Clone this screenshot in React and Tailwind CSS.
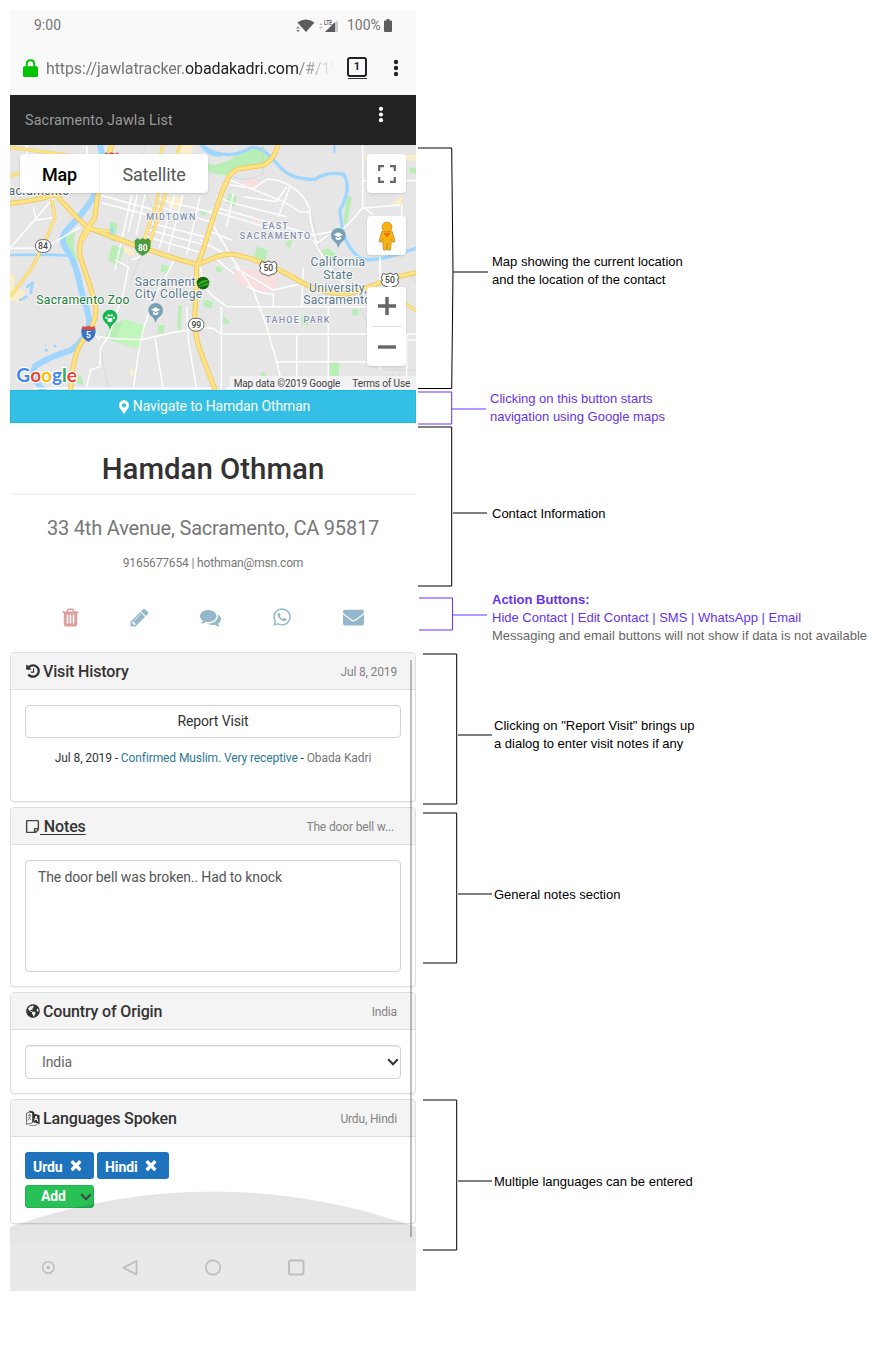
import React from "react";
import { FaWhatsapp, FaEnvelope, FaRegStickyNote, FaGlobeAmericas, FaMapMarkerAlt } from "react-icons/fa";

const GLYPHS = {
  trash:
    "M704 1376v-704q0-14-9-23t-23-9h-64q-14 0-23 9t-9 23v704q0 14 9 23t23 9h64q14 0 23-9t9-23zm256 0v-704q0-14-9-23t-23-9h-64q-14 0-23 9t-9 23v704q0 14 9 23t23 9h64q14 0 23-9t9-23zm256 0v-704q0-14-9-23t-23-9h-64q-14 0-23 9t-9 23v704q0 14 9 23t23 9h64q14 0 23-9t9-23zm-544-992h448l-48-117q-7-9-17-11h-317q-10 2-17 11zm928 32v64q0 14-9 23t-23 9h-96v948q0 83-47 143.500t-113 60.500h-832q-66 0-113-58.500t-47-141.500v-952h-96q-14 0-23-9t-9-23v-64q0-14 9-23t23-9h309l70-167q15-37 54-63t79-26h320q40 0 79 26t54 63l70 167h309q14 0 23 9t9 23z",
  pencil:
    "M491 1536l91-91-235-235-91 91v107h128v128h107zm523-928q0-22-22-22-10 0-17 7l-542 542q-7 7-7 17 0 22 22 22 10 0 17-7l542-542q7-7 7-17zm-54-192l416 416-832 832h-416v-416zm683 96q0 53-37 90l-166 166-416-416 166-165q36-38 90-38 53 0 91 38l235 234q37 39 37 91z",
  comments:
    "M1408 768q0 139-94 257t-256.500 186.500-353.500 68.500q-86 0-176-16-124 88-278 128-36 9-86 16h-3q-11 0-20.500-8t-11.500-21q-1-3-1-6.500t.5-6.500 2-6l2.500-5 3.500-5.500 4-5 4.500-5 4-4.500q5-6 23-25t26-29.500 22.500-29 25-38.500 20.500-44q-124-72-195-177t-71-224q0-139 94-257t256.500-186.500 353.500-68.500 353.500 68.500 256.500 186.500 94 257zm384 256q0 120-71 224.500t-195 176.500q10 24 20.500 44t25 38.500 22.500 29 26 29.500 23 25q1 1 4 4.500t4.500 5 4 5 3.500 5.500l2.500 5 2 6 .5 6.500-1 6.500q-3 14-13 22t-22 7q-50-7-86-16-154-40-278-128-90 16-176 16-271 0-472-132 58 4 88 4 161 0 309-45t264-129q125-92 192-212t67-254q0-77-23-152 129 71 204 178t75 230z",
  history:
    "M1664 896q0 156-61 298t-164 245-245 164-298 61q-172 0-327-72.500t-264-204.500q-7-10-6.500-22.500t8.500-20.500l137-138q10-9 25-9 16 2 23 12 73 95 179 147t225 52q104 0 198.500-40.500t163.500-109.500 109.500-163.500 40.500-198.500-40.500-198.500-109.500-163.500-163.500-109.500-198.500-40.500q-98 0-188 35.500t-160 101.500l137 138q31 30 14 69-17 40-59 40h-448q-26 0-45-19t-19-45v-448q0-42 40-59 39-17 69 14l130 129q107-101 244.500-156.500t284.500-55.500q156 0 298 61t245 164 164 245 61 298zm-640-288v448q0 14-9 23t-23 9h-320q-14 0-23-9t-9-23v-64q0-14 9-23t23-9h224v-352q0-14 9-23t23-9h64q14 0 23 9t9 23z",
  times:
    "M1490 1322q0 40-28 68l-136 136q-28 28-68 28t-68-28l-294-294-294 294q-28 28-68 28t-68-28l-136-136q-28-28-28-68t28-68l294-294-294-294q-28-28-28-68t28-68l136-136q28-28 68-28t68 28l294 294 294-294q28-28 68-28t68 28l136 136q28 28 28 68t-28 68l-294 294 294 294q28 28 28 68z",
};

function Glyph({ name, className }) {
  return (
    <svg viewBox="0 0 1792 1792" fill="currentColor" className={className}>
      <path d={GLYPHS[name]} />
    </svg>
  );
}

function LanguageIcon({ className }) {
  return (
    <svg viewBox="0 0 14 16" className={className}>
      <path d="M0.5 3.2 6.5 1.5V12.800L0.500 14.400Z" fill="#f4f4f4" stroke="#333" strokeWidth=".7" />
      <path d="M1.800 5.600 5 4.900M3.300 4.200V5.500M4.700 5.300Q4 8.500 1.600 10.500M2.200 7.200Q3.800 8.200 4.900 10" fill="none" stroke="#555" strokeWidth=".7" />
      <path d="M3.500 0.500 8.200 2 8.200 5 6.500 3.500 3 1.700Z" fill="#333" />
      <path d="M6.700 3.200 13.600 5.200V14L6.700 12Z" fill="#333" />
      <path d="M8.600 10.600 10.100 6 11.800 11.500M9.100 9.200 11.200 9.700" fill="none" stroke="#fff" strokeWidth="1" />
      <path d="M3.500 15.400Q8 16.400 11.500 14.600" fill="none" stroke="#555" strokeWidth=".7" />
    </svg>
  );
}

const YELLOW_ROADS = [
  "M30 190Q100 184 168 163Q210 215 262 262C340 292 460 340 592 374C625 362 660 340 695 343C760 352 830 385 880 412C930 445 985 462 1040 462C1100 450 1150 415 1248 398",
  "M335 15 318 80 292 170 284 235 262 265Q234 300 240 345C250 390 280 450 288 510Q285 560 250 600 218 640 212 750",
  "M590 374 588 450 584 540C584 610 610 650 645 750",
  "M592 374C615 330 650 180 680 125Q692 92 720 86L790 76Q822 62 834 15",
];
const THIN_YELLOW = [
  "M155 180 165 232 135 305 95 385 30 470",
  "M30 22 150 38 220 48",
  "M425 318 470 190 482 100Q478 40 490 15",
  "M445 322 488 190 510 100Q525 60 540 15",
  "M30 110 70 92 100 60",
  "M250 300 270 265 330 275",
  "M1212 488 1248 512",
];
const WHITE_ROADS = [
  "M30 325 130 325 240 262 M30 325 160 175 M100 200 108 240 168 232 M80 15 82 50 M260 15 262 60",
  "M395 165 365 300 345 390 M412 165 385 275 M435 165 408 285",
  "M300 165 470 212 M305 188 455 228 M470 175 650 222 M460 195 645 250 M455 250 635 296 M450 270 625 318 M440 290 610 340",
  "M524 165 478 325 M548 165 505 335 M600 170 560 345",
  "M300 590Q360 600 430 598L530 575 600 565 640 565 664 582H1248",
  "M260 740 272 690 300 680 302 622 325 590 370 460 385 380 345 360 M400 745 415 640 432 560 460 480 520 365",
  "M465 595 490 750 M395 360 420 350 M265 560 300 600",
  "M560 500 565 600 590 750 M600 380 612 440 640 470 680 500H1100 M664 500V750",
  "M630 240 700 360 760 450 800 560 830 665 850 750 M600 300 680 345 M620 270 695 300 M630 210 860 280 930 300",
  "M640 200 940 285 1025 270Q1060 240 1085 205L1200 195 M650 170 700 190 860 230 M690 120 850 185 900 215H930",
  "M690 135 760 145 800 118 830 120Q910 145 930 210 930 260 952 310",
  "M730 170 830 185 860 140 M870 140 835 230 M700 160 680 260",
  "M1088 15V200L1120 225 M1088 122H1248 M1205 195V250 M1140 350V425 M950 310 985 285 M940 300 960 335 1000 400 1035 430",
  "M700 380 820 450 910 430 M910 385 905 500 M740 440 790 460 820 462V500 M700 400 640 350",
  "M890 582V750 M985 500V750 M830 665H1100 M1220 600H1248 M1220 582V750 M680 745H1100 M1140 600V690 M100 745H640",
];
const GREENS = [
  "M628 80 690 60 715 35 790 20 818 55 790 75 715 85 690 108 630 98Z",
  "M335 315 372 325 355 380 325 360Z",
  "M315 590 330 560 372 538 430 556 418 628 345 605Z",
  "M330 245 352 250 345 305 322 298Z",
  "M195 290 225 275 220 320 235 365 200 340Z",
  "M485 372 508 380 500 402 482 392Z",
  "M535 495 545 495 542 570 532 570Z",
  "M475 555 495 555 490 582 472 580Z",
  "M640 75 620 70 625 95 660 100Z",
  "M600 208 622 215 618 228 598 220Z",
  "M685 160 710 170 705 200 678 188Z",
  "M770 320 803 330 795 365 762 352Z",
  "M1040 165 1056 170 1040 255 1030 250Z",
  "M860 305 878 298 870 325 855 318Z",
  "M965 330 985 325 1010 345 1000 360 975 350Z",
  "M612 478 640 485 635 505 610 500Z",
  "M645 378 670 385 660 400 650 395Z",
  "M670 530 690 545 680 555 668 545Z",
  "M905 525 930 530 922 558 905 550Z",
  "M988 665 1018 668 1016 710 988 706Z",
  "M1058 505 1075 510 1076 528 1055 525Z",
  "M1228 80 1248 85V102L1228 98Z",
  "M780 700 792 695 800 710 785 712Z",
  "M225 695 245 710 250 735 230 730Z",
];

function Shield50({ x, y }) {
  return (
    <g transform={`translate(${x} ${y})`}>
      <path d="M-20-20-10-16 0-21 10-16 20-20 26-8Q20 0 26 8 22 20 8 20L0 24-8 20Q-22 20-26 8-20 0-26-8Z" fill="#fff" stroke="#555" strokeWidth="3" />
      <text textAnchor="middle" y="9" fontSize="26" fontWeight="500" fill="#444">50</text>
    </g>
  );
}

function CollegePin({ x, y }) {
  return (
    <g transform={`translate(${x} ${y})`}>
      <path d="M0 32Q-4 16-14 10A22 22 0 1 1 14 10Q4 16 0 32Z" fill="#78a0b4" />
      <path d="M-14-9 0-16 14-9 0-2ZM-8-3V4Q0 10 8 4V-3L0 2Z" fill="#fff" />
    </g>
  );
}

function MapDrawing() {
  return (
    <svg viewBox="30 15 1218 735" preserveAspectRatio="none" className="block h-[245px] w-full font-[Roboto,sans-serif]">
      <rect x="30" y="15" width="1218" height="735" fill="#e6e6e6" />
      <g fill="#fbeecb">
        <path d="M30 395 45 410 40 440 75 455 65 490 30 480Z" />
        <path d="M370 320 405 330 400 350 375 340ZM500 170 550 175 540 210 505 200ZM1172 195 1206 168V198ZM1095 45H1248V62H1095ZM100 80 135 100 125 130 80 120Z" />
        <path d="M540 15H580L570 50 540 55ZM1170 590 1190 600 1185 615ZM390 685 402 690 400 710 388 705Z" />
      </g>
      <g fill="#f8dfe0">
        <path d="M725 130 750 112 775 125 770 145 740 148Z" />
        <path d="M705 380 830 400 835 450 790 460 740 445 705 420ZM755 235 780 240 775 250 755 248Z" />
      </g>
      <g fill="#b9efb6">
        {GREENS.map((d) => <path key={d} d={d} />)}
      </g>
      <path d="M372 538 430 556 418 628 345 605Z" fill="#c0f5bb" />
      <g fill="none" stroke="#9fd6ff" strokeLinecap="round" strokeLinejoin="round">
        <path d="M300 15Q318 80 278 175 250 220 205 265 178 290 194 320 225 360 238 425C244 470 268 510 268 550Q258 600 210 632 150 650 106 678 85 705 130 750" strokeWidth="18" />
        <path d="M30 345 150 344 215 348" strokeWidth="8" />
        <path d="M605 15Q625 45 660 44" strokeWidth="12" />
        <path d="M82 440 98 428 92 460M60 480 80 470M138 630 140 632M165 618 166 619M337 265 334 290" strokeWidth="8" />
        <path d="M605 15Q640 45 690 44 725 40 755 22C790 20 810 50 830 70 860 110 900 118 945 118 970 100 1000 98 1030 102 1050 130 1045 165 1020 210 1025 280 1038 320 1080 355 1120 368 1170 350 1248 325" strokeWidth="10" />
        <path d="M1003 18V35" strokeWidth="7" />
      </g>
      <g fill="none" stroke="#cfd1d3" strokeWidth="2">
        <path d="M438 15 410 100M440 165 470 230 390 430 M700 110Q740 130 790 100V15 M930 200 960 330 1060 460 1120 590 M1150 690H1248M1160 700V740M1180 700V740M1200 700V740M1150 715H1240 M300 620 325 750M1230 400 1248 430" />
      </g>
      <g fill="none" stroke="#fff" strokeWidth="4.500" strokeLinejoin="round">
        {WHITE_ROADS.map((d) => <path key={d} d={d} />)}
      </g>
      <g fill="none" strokeLinejoin="round">
        {THIN_YELLOW.map((d) => <path key={d} d={d} stroke="#f3cd68" strokeWidth="10" />)}
        {YELLOW_ROADS.map((d) => <path key={d} d={d} stroke="#edc75c" strokeWidth="15" />)}
        {THIN_YELLOW.map((d) => <path key={d} d={d} stroke="#ffe68a" strokeWidth="6" />)}
        {YELLOW_ROADS.map((d) => <path key={d} d={d} stroke="#ffe284" strokeWidth="10" />)}
      </g>

      <g stroke="#fff" strokeWidth="5" paintOrder="stroke" strokeOpacity=".75" fontSize="27" fill="#8390b2" fontWeight="500" letterSpacing="3.600" textAnchor="middle">
        <text x="514" y="239">MIDTOWN</text>
        <text x="827" y="268">EAST</text>
        <text x="827" y="296">SACRAMENTO</text>
        <text x="894" y="550">TAHOE PARK</text>
      </g>
      <g stroke="#fff" strokeWidth="6" paintOrder="stroke" strokeOpacity=".8" fontSize="36.500" fill="#5b7a8c" textAnchor="middle" letterSpacing=".9">
        <text x="404" y="437" textAnchor="start">Sacrament</text>
        <text x="506" y="475">City College</text>
        <text x="1014" y="378">California</text>
        <text x="1014" y="416">State</text>
        <text x="1014" y="455">University,</text>
        <text x="1012" y="493">Sacramento</text>
        <text x="249" y="493" fill="#1b7f3a">Sacramento Zoo</text>
        <text x="117" y="164" fill="#566">acramento</text>
      </g>

      <g fill="#fff" stroke="#666" strokeWidth="3">
        <rect x="106" y="299" width="47" height="38" rx="19" />
        <rect x="565" y="535" width="47" height="38" rx="19" />
      </g>
      <g fontSize="26" fontWeight="500" fill="#444" textAnchor="middle">
        <text x="129" y="327">84</text>
        <text x="589" y="563">99</text>
      </g>
      <Shield50 x={805} y={384} />
      <Shield50 x={1170} y={420} />
      <path d="M404 300H452L451 325Q446 340 428 347 409 340 405 325Z" fill="#4b9c3c" />
      <path d="M407 300 412 294 420 299 428 294 436 299 444 294 450 300V309H406Z" fill="#4b9c3c" />
      <text x="428" y="333" textAnchor="middle" fontSize="25" fontWeight="700" fill="#fff">80</text>
      <path d="M245 565H286Q292 592 265 606 238 592 245 565Z" fill="#3a73c8" />
      <path d="M247 558 256 561 265 557 274 561 284 558 285 569H246Z" fill="#d94b3d" />
      <text x="265" y="594" textAnchor="middle" fontSize="25" fontWeight="700" fill="#fff">5</text>
      <path d="M315 37 325 41 335 37 345 41 355 37 356 48H314Z" fill="#d94b3d" />

      <CollegePin x={467} y={518} />
      <CollegePin x={1015} y={293} />
      <path d="M330 570Q326 554 316 548A22 22 0 1 1 344 548Q334 554 330 570Z" fill="#12b64b" />
      <g fill="#fff">
        <ellipse cx="330" cy="540" rx="8" ry="6.500" />
        <circle cx="319" cy="533" r="3.500" />
        <circle cx="326" cy="526" r="3.500" />
        <circle cx="335" cy="526" r="3.500" />
        <circle cx="342" cy="533" r="3.500" />
      </g>
      <circle cx="609" cy="429" r="19" fill="#17670d" />
      <path d="M592 434Q605 416 625 421L627 434 598 441Z" fill="#2fae22" />
      <path d="M594 438 626 425" stroke="#0d4a08" strokeWidth="3" />

      <g fontSize="57" fontWeight="700" stroke="#fff" strokeWidth="7" paintOrder="stroke" strokeLinejoin="round" fontFamily="Lato, sans-serif">
        <text x="49" y="727" textLength="182" lengthAdjust="spacingAndGlyphs">
          <tspan fill="#4285f4">G</tspan><tspan fill="#ea4335">o</tspan><tspan fill="#fbbc05">o</tspan><tspan fill="#4285f4">g</tspan><tspan fill="#34a853">l</tspan><tspan fill="#ea4335">e</tspan>
        </text>
      </g>
      <rect x="688" y="708" width="560" height="42" fill="#f5f5f5" fillOpacity=".75" />
      <g fontSize="30" fill="#444">
        <text x="701" y="742" textLength="320">Map data ©2019 Google</text>
        <text x="1057" y="742" textLength="174">Terms of Use</text>
      </g>
    </svg>
  );
}

function Kebab({ className }) {
  return (
    <svg viewBox="0 0 6 18" className={className} fill="currentColor">
      <circle cx="3" cy="3" r="2.200" />
      <circle cx="3" cy="9" r="2.200" />
      <circle cx="3" cy="15" r="2.200" />
    </svg>
  );
}

function StatusBar() {
  return (
    <div className="flex h-[31px] items-center pl-6 pr-6 text-[14px] text-[#757575]">
      <span className="flex-1">9:00</span>
      <svg viewBox="0 0 44 14" className="mr-[7px] h-3.5 w-[44px]">
        <path d="M1.500 3.500Q9.500-2.500 18.500 3.500L10 13Z" fill="#5c5c5c" />
        <path d="M0 9.500 2 7.500 4 9.500ZM0 11 2 13 4 11Z" fill="#777" />
        <path d="M23 6 24.800 4 26.500 6ZM23 8 24.800 10 26.500 8Z" fill="#bbb" />
        <path d="M42 1V13H39V4Z" fill="#ccc" />
        <path d="M29 13 39 3V13Z" fill="#5c5c5c" />
        <text x="28" y="5.500" fontSize="6.500" fontWeight="700" fill="#666" textLength="8" lengthAdjust="spacingAndGlyphs">LTE</text>
      </svg>
      <span className="w-[35px]">100%</span>
      <svg viewBox="0 0 8 13" className="ml-[2px] h-[13px] w-2">
        <path d="M2.500 0h3v1.500H7q1 0 1 1V12q0 1-1 1H1q-1 0-1-1V2.500q0-1 1-1h1.500Z" fill="#5c5c5c" />
      </svg>
    </div>
  );
}

function AddressBar() {
  return (
    <div className="flex h-[54px] items-center pl-[13px] pr-[16px]">
      <svg viewBox="0 0 15 18" className="h-[18px] w-[15px]">
        <path d="M3.700 8V5Q3.700 1.200 7.500 1.200T11.300 5V8" fill="none" stroke="#00c400" strokeWidth="2" />
        <rect y="7.200" width="15" height="10.800" rx="1.500" fill="#00c400" />
      </svg>
      <div className="ml-2 w-[292px] whitespace-nowrap pt-px text-[16px] tracking-[-0.12px] text-[#777] [mask-image:linear-gradient(to_right,#000_86%,transparent_99%)]">
        https://jawlatracker.<span className="text-[#222]">obadakadri.com</span>/#/1V
      </div>
      <div className="ml-[9px] mr-auto flex flex-col items-center gap-px">
        <span className="flex h-5 w-5 items-center justify-center rounded-[3px] border-2 border-[#222] text-[11px] font-bold text-[#222]">1</span>
        <span className="h-px w-[19px] bg-[#333]" />
      </div>
      <Kebab className="h-[18px] w-2 text-[#222]" />
    </div>
  );
}

function MapControls() {
  return (
    <>
      <div className="absolute left-[10px] top-[9px] flex h-[39px] rounded-sm bg-white pt-0.5 text-[18px] tracking-[-0.15px] shadow">
        <span className="flex w-[80px] items-center justify-center border-r border-[#eee] font-medium text-black">Map</span>
        <span className="flex w-[108px] items-center justify-center text-[#565656]">Satellite</span>
      </div>
      <div className="absolute left-[357px] top-[9px] flex h-[39px] w-[39px] items-center justify-center rounded-sm bg-white shadow">
        <svg viewBox="0 0 18 18" className="h-[18px] w-[18px]" fill="none" stroke="#666" strokeWidth="2.200">
          <path d="M1.200 6V1.200H6M12 1.200h4.800V6M16.800 12v4.800H12M6 16.800H1.200V12" />
        </svg>
      </div>
      <div className="absolute left-[357px] top-[71px] flex h-[39px] w-[39px] items-center justify-center rounded-sm bg-white shadow">
        <svg viewBox="0 0 18 30" className="h-[30px] w-[18px]">
          <path d="M4 10Q9 12 14 10L17 20 15 21.500 13.500 18 12.500 29H9.700L9 22 8.300 29H5.500L4.500 18 3 21.500 1 20Z" fill="#fbb40e" stroke="#b98a2a" strokeWidth=".8" />
          <path d="M5 11.500Q9 13 13 11.500L9 16.500Z" fill="#e8710a" />
          <circle cx="9" cy="6" r="4.900" fill="#fbb40e" stroke="#b98a2a" strokeWidth=".8" />
        </svg>
      </div>
      <div className="absolute left-[357px] top-[142px] flex h-[79px] w-[39px] flex-col items-center rounded-sm bg-white shadow">
        <svg viewBox="0 0 18 18" className="mt-[10px] h-[18px] w-[18px]" stroke="#666" strokeWidth="3.400">
          <path d="M0 9H18M9 0V18" />
        </svg>
        <span className="mt-[11px] h-px w-[30px] bg-[#e2e2e2]" />
        <svg viewBox="0 0 18 18" className="mt-[11px] h-[18px] w-[18px]" stroke="#666" strokeWidth="3.400">
          <path d="M0 9H18" />
        </svg>
      </div>
    </>
  );
}

function Card({ icon, title, aside, asideClass = "", className, children }) {
  return (
    <section className={`mb-[5px] flex flex-col rounded-[4px] border border-[#dedede] bg-white shadow-[0_1px_1px_rgba(0,0,0,.05)] ${className}`}>
      <header className="flex h-[37px] shrink-0 items-center rounded-t-[3px] border-b border-[#dedede] bg-[#f4f4f4] px-[14px] pr-[18px] text-[#333]">
        {icon}
        <h2 className="flex-1 pt-0.5 text-[16px] font-medium leading-5 tracking-[-0.15px]">{title}</h2>
        <span className={`pt-px text-[12px] tracking-[-0.15px] text-[#828282] ${asideClass}`}>{aside}</span>
      </header>
      <div className="px-[14px] pt-[15px]">{children}</div>
    </section>
  );
}

function Chevron({ className }) {
  return (
    <svg viewBox="0 0 12 8" className={className} fill="none" stroke="currentColor" strokeWidth="2">
      <path d="M1.200 1.200 6 6.200 10.800 1.200" />
    </svg>
  );
}

function Tag({ children, className }) {
  return (
    <span className={`flex h-[27px] items-center rounded-[3px] bg-[#1f73bd] pl-2 pt-[3px] text-[14px] font-bold tracking-[-0.1px] text-white ${className}`}>
      {children}
      <Glyph name="times" className="ml-[5px] h-4 w-4 -translate-y-[2px]" />
    </span>
  );
}

function Phone() {
  return (
    <main className="relative mt-[10px] flex h-[1281px] w-[406px] flex-col bg-white font-[Roboto,sans-serif]">
      <div className="h-[85px] bg-[#f9f9f9]">
        <StatusBar />
        <AddressBar />
      </div>
      <nav className="flex h-[50px] items-center justify-between bg-[#222] pl-[15px] pr-[31px] text-[14.3px] tracking-[0.15px] text-[#999]">
        <span className="pt-0.5">Sacramento Jawla List</span>
        <Kebab className="mb-3 h-[17px] w-2 text-white" />
      </nav>
      <div className="relative h-[245px]">
        <MapDrawing />
        <MapControls />
      </div>
      <button className="flex h-[33px] items-center justify-center gap-1 border border-[#1cb9dd] bg-[#33c0e4] pl-[3px] text-[14px] tracking-[-0.13px] text-white">
        <FaMapMarkerAlt className="h-[14px] w-[10px]" />
        <span>Navigate to Hamdan Othman</span>
      </button>

      <h1 className="flex h-[72px] items-end justify-center border-b-2 border-[#f5f5f5] pb-1.5 text-[29.4px] font-medium leading-9 text-[#333]">Hamdan Othman</h1>
      <p className="mt-5 text-center text-[20px] leading-[26px] tracking-[-0.2px] text-[#777]">33 4th Avenue, Sacramento, CA 95817</p>
      <p className="mt-3.5 text-center text-[12px] leading-4 tracking-[-0.16px] text-[#777]">9165677654 | hothman@msn.com</p>
      <div className="mt-[36px] flex h-5 items-center text-[#93b8cb]">
        <Glyph name="trash" className="ml-[50px] h-[21px] w-[21px] text-[#dd9f9e]" />
        <Glyph name="pencil" className="ml-[48px] h-[21px] w-[21px]" />
        <Glyph name="comments" className="ml-[50px] h-[21px] w-[21px]" />
        <FaWhatsapp className="ml-[51px] h-5 w-5" />
        <FaEnvelope className="ml-[51px] h-[21px] w-[21px]" />
      </div>

      <div className="mt-[25px]">
        <Card className="h-[150px]" icon={<Glyph name="history" className="mr-0.5 h-4 w-4" />} title="Visit History" aside="Jul 8, 2019">
          <button className="h-[33px] w-full rounded-[4px] border border-[#d4d4d4] text-[14px] tracking-[-0.12px] text-[#333]">Report Visit</button>
          <p className="mt-3 text-center text-[12px] leading-4 tracking-[-0.1px] text-[#333]">
            Jul 8, 2019 - <span className="text-[#2d7797]">Confirmed Muslim. Very receptive</span> - <span className="text-[#777]">Obada Kadri</span>
          </p>
        </Card>
        <Card
          className="h-[180px]"
          icon={<FaRegStickyNote className="h-[15px] w-[15px] text-[#444]" />}
          title={<span className="whitespace-pre underline decoration-1 underline-offset-2"> Notes</span>}
          aside="The door bell w..."
          asideClass="mr-[3px]"
        >
          <div className="h-[112px] rounded-[4px] border border-[#d4d4d4] px-3 pt-1.5 text-[14px] leading-5 tracking-[-0.13px] text-[#555]">The door bell was broken.. Had to knock</div>
        </Card>
        <Card className="h-[102px]" icon={<FaGlobeAmericas className="ml-px mr-[3px] h-[14px] w-[14px]" />} title="Country of Origin" aside="India">
          <div className="flex h-[34px] items-center justify-between rounded-[4px] border border-[#d4d4d4] pl-4 pr-px text-[14px] tracking-[-0.1px] text-[#666] shadow-[inset_0_1px_1px_rgba(0,0,0,.08)]">
            India
            <Chevron className="h-2 w-3 text-[#333]" />
          </div>
        </Card>
        <Card className="h-[125px]" icon={<LanguageIcon className="ml-px mr-[3px] h-4 w-[14px]" />} title="Languages Spoken" aside="Urdu, Hindi">
          <div className="flex gap-[3px]">
            <Tag className="w-[69px]">Urdu</Tag>
            <Tag className="w-[72px]">Hindi</Tag>
          </div>
          <div className="mt-[6px] flex h-[23px] w-[69px] items-center justify-between rounded-[3px] border border-[#24b04d] bg-[#28c156] pl-[15px] pr-px text-[14px] font-bold tracking-[-0.1px] text-white">
            Add
            <Chevron className="h-2 w-3 text-[#444]" />
          </div>
        </Card>
      </div>

      <svg viewBox="0 0 406 100" className="pointer-events-none absolute bottom-0 left-0 h-[100px] w-full">
        <path d="M0 36Q100 0.500 203 0.500T406 36V52H0Z" fill="#000" fillOpacity=".1" />
        <rect y="52" width="406" height="48" fill="#e9e9e9" />
        <g fill="none" stroke="#bdbdbd" strokeWidth="1.500">
          <circle cx="38.300" cy="76.500" r="5.800" />
          <path d="M126.500 70V83.500L113.500 76.700Z" strokeWidth="1.800" strokeLinejoin="round" />
          <circle cx="203" cy="76.500" r="7.200" strokeWidth="1.700" />
          <rect x="279" y="69.500" width="14.500" height="14" rx="2" strokeWidth="1.900" />
        </g>
        <circle cx="38.300" cy="76.500" r="1.700" fill="#bbb" />
      </svg>
      <div className="absolute left-[400px] top-[650px] h-[577px] w-[2px] bg-black/25" />
    </main>
  );
}

function Note({ className, top, height, path, stroke = "#000", children }) {
  return (
    <div className={`flex ${className}`}>
      <svg viewBox={`416 ${top} 78 ${height}`} className="h-full w-[78px] shrink-0" fill="none" stroke={stroke}>
        <path d={path} />
      </svg>
      {children}
    </div>
  );
}

function Notes() {
  return (
    <aside className="w-[461px] whitespace-nowrap font-['Liberation_Sans',Arial,sans-serif] text-[13px] leading-[18px] text-black">
      <Note className="h-[389px]" top={0} height={389} path="M418 148H451.700L453 272 451.700 388.500H418M453 272H488">
        <p className="-ml-0.5 pt-[253px]">Map showing the current location<br />and the location of the contact</p>
      </Note>
      <Note className="h-[36px]" top={389} height={36} stroke="#6633ff" path="M418 392H451.700V424H418M451.700 409H486">
        <p className="-ml-1 pt-px text-[#6633ee]">Clicking on this button starts<br />navigation using Google maps</p>
      </Note>
      <Note className="h-[165px]" top={425} height={165} path="M418 427H451.700V586H418M453 513H487">
        <p className="-ml-0.5 pt-[80px]">Contact Information</p>
      </Note>
      <Note className="h-[60px]" top={590} height={60} stroke="#6633ff" path="M419 598H452.500V630H419M453 615H487">
        <p className="-ml-0.5 pt-px text-[#6633ee]">
          <b>Action Buttons:</b><br />Hide Contact | Edit Contact | SMS | WhatsApp | Email<br />
          <span className="text-[#666]">Messaging and email buttons will not show if data is not available</span>
        </p>
      </Note>
      <Note className="h-[158px]" top={650} height={158} path="M423 654H456.700V804H423M458 735H492">
        <p className="pt-[67px]">Clicking on "Report Visit" brings up<br />a dialog to enter visit notes if any</p>
      </Note>
      <Note className="h-[287px]" top={808} height={287} path="M423 813H456.700V963H423M458 894H492">
        <p className="pt-[78px]">General notes section</p>
      </Note>
      <Note className="h-[267px]" top={1095} height={267} path="M423 1100H456.700V1250H423M458 1181H492">
        <p className="pt-[78px]">Multiple languages can be entered</p>
      </Note>
    </aside>
  );
}

export default function App() {
  return (
    <div className="flex h-[1362px] w-[877px] overflow-hidden bg-white pl-[10px]">
      <Phone />
      <Notes />
    </div>
  );
}
